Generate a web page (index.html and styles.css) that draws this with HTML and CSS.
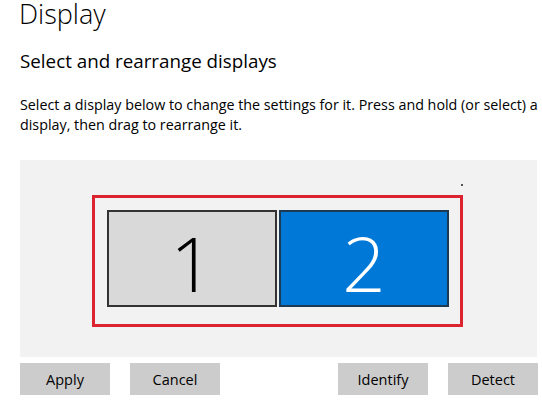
FILE: index.html
```html
<!DOCTYPE html>
<html>
<head>
<meta charset="utf-8">
<link rel="stylesheet" href="styles.css">
</head>
<body>
<div class="page">
  <h1 class="title">Display</h1>
  <h2 class="subtitle">Select and rearrange displays</h2>
  <p class="desc">Select a display below to change the settings for it. Press and hold (or select) a display, then drag to rearrange it.</p>
  <div class="canvas">
    <span class="dot"></span>
    <div class="selection">
      <div class="monitor monitor-1">1</div>
      <div class="monitor monitor-2">2</div>
    </div>
  </div>
  <div class="actions">
    <div class="group">
      <button class="btn">Apply</button>
      <button class="btn">Cancel</button>
    </div>
    <div class="group">
      <button class="btn">Identify</button>
      <button class="btn">Detect</button>
    </div>
  </div>
</div>
</body>
</html>
```
FILE: styles.css
```css
html, body {
  margin: 0;
  padding: 0;
  background: #ffffff;
}
body {
  font-family: "Open Sans", "Noto Sans", sans-serif;
  color: #000000;
  width: 542px;
  height: 403px;
  overflow: hidden;
}
.page {
  padding: 0 4px 0 20px;
}
.title {
  margin: 0 0 0 -1px;
  font-size: 27px;
  font-weight: 300;
  line-height: 28px;
}
.subtitle {
  margin: 21px 0 0 0;
  font-size: 18.8px;
  font-weight: 400;
  line-height: 24px;
}
.desc {
  margin: 22px 0 0 0;
  font-size: 14.3px;
  line-height: 20px;
  width: 522px;
}
.canvas {
  position: relative;
  margin-top: 25px;
  height: 197px;
  width: 517px;
  background: #f2f2f2;
  padding-top: 35px;
  padding-left: 72px;
  box-sizing: border-box;
}
.dot {
  position: absolute;
  left: 441px;
  top: 24px;
  width: 2px;
  height: 2px;
  background: #555555;
}
.selection {
  display: flex;
  gap: 2px;
  width: 371px;
  height: 132px;
  box-sizing: border-box;
  border: 3px solid #dc2430;
  padding: 12px 11px 17px 12px;
}
.monitor {
  flex: 1;
  box-sizing: border-box;
  border: 2px solid #333333;
  display: flex;
  align-items: center;
  justify-content: center;
  font-size: 76px;
  font-weight: 300;
  line-height: 1;
  padding-top: 8px;
}
.monitor-1 {
  background: #d9d9d9;
  color: #000000;
}
.monitor-2 {
  background: #0078d7;
  color: #ffffff;
  border-color: #1d3a55;
}
.actions {
  display: flex;
  justify-content: space-between;
  margin-top: 6px;
  width: 518px;
}
.group {
  display: flex;
  gap: 20px;
}
.btn {
  width: 90px;
  height: 32px;
  border: none;
  background: #cccccc;
  font-family: "Open Sans", "Noto Sans", sans-serif;
  font-size: 14.5px;
  color: #000000;
  padding: 0;
}
```
